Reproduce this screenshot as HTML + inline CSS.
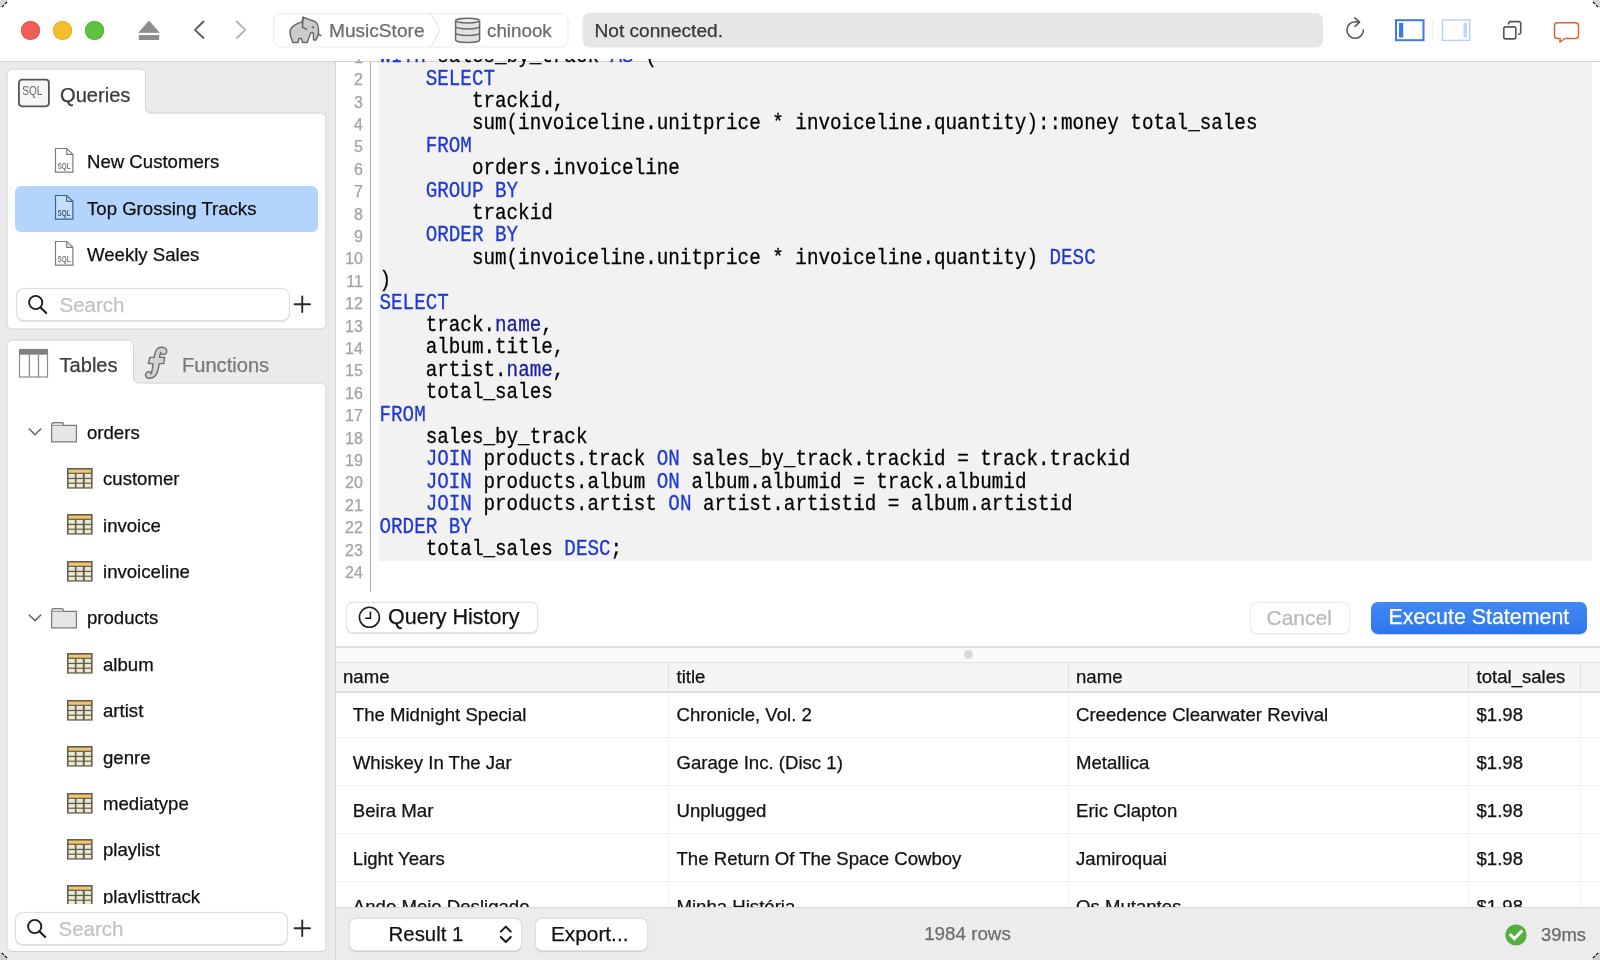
<!DOCTYPE html>
<html><head><meta charset="utf-8"><style>
html,body{margin:0;padding:0;width:1600px;height:960px;overflow:hidden;background:#fff;font-family:"Liberation Sans", sans-serif;}
.r{position:absolute;box-sizing:border-box;}
.t{position:absolute;white-space:pre;font-family:"Liberation Sans", sans-serif;-webkit-text-stroke:0.25px currentColor;}
#root{position:absolute;left:0;top:0;width:1600px;height:960px;overflow:hidden;will-change:transform;}
</style></head><body>
<div id="root">
<div class="r" style="left:0px;top:0px;width:1600px;height:61px;background:#fff;"></div>
<div class="r" style="left:0px;top:61px;width:1600px;height:1px;background:#d2d2d2;"></div>
<div class="r" style="left:0px;top:62px;width:335px;height:898px;background:#ebebeb;"></div>
<div class="r" style="left:335px;top:62px;width:1px;height:898px;background:#d4d4d4;"></div>
<div class="r" style="left:336px;top:62px;width:1264px;height:845px;background:#fff;"></div>
<div class="r" style="left:21.0px;top:21px;width:19px;height:19px;border-radius:50%;background:#ee5f57;box-shadow:inset 0 0 0 0.6px #dc4a41;"></div>
<div class="r" style="left:53.0px;top:21px;width:19px;height:19px;border-radius:50%;background:#f5bd2e;box-shadow:inset 0 0 0 0.6px #dea123;"></div>
<div class="r" style="left:85.0px;top:21px;width:19px;height:19px;border-radius:50%;background:#5bc43f;box-shadow:inset 0 0 0 0.6px #48a92f;"></div>

<svg class="r" style="left:0;top:0" width="1600" height="61" viewBox="0 0 1600 61">
 <path d="M149 21 L159.2 32.6 L138.8 32.6 Z" fill="#8d8d8d" stroke="#8d8d8d" stroke-width="0.8" stroke-linejoin="round"/>
 <rect x="138.8" y="35" width="20.4" height="5" fill="#8d8d8d"/>
 <path d="M203.5 21.5 L195 29.8 L203.5 38" fill="none" stroke="#585858" stroke-width="1.8" stroke-linecap="round" stroke-linejoin="round"/>
 <path d="M236.8 21.5 L245.3 29.8 L236.8 38" fill="none" stroke="#b3b3b3" stroke-width="1.8" stroke-linecap="round" stroke-linejoin="round"/>
 <!-- breadcrumb -->
 <rect x="273.5" y="13.5" width="294.5" height="33.5" rx="7" fill="#fff" stroke="#ececec" stroke-width="1"/>
 <path d="M431 13.5 L440 30 L431 47" fill="none" stroke="#e2e2e2" stroke-width="1"/>
 <!-- not connected -->
 <rect x="582.5" y="13" width="740.5" height="34.5" rx="7" fill="#e6e6e6"/>
 <!-- reload -->
 <path d="M1358.8 21.9 C1357.7 21.75 1356.4 21.7 1355.2 21.7 A8.3 8.3 0 1 0 1363.5 30" fill="none" stroke="#585858" stroke-width="1.6" stroke-linecap="round"/>
 <path d="M1354.9 17.9 L1359.6 22.2 L1355.1 26.4" fill="none" stroke="#585858" stroke-width="1.6" stroke-linecap="round" stroke-linejoin="round"/>
 <!-- sidebar toggles -->
 <rect x="1396" y="20.2" width="27.5" height="20" fill="#fff" stroke="#3a7be3" stroke-width="2"/>
 <rect x="1399" y="23" width="4.2" height="14.5" fill="#3a7be3"/>
 <rect x="1432" y="20" width="1" height="21" fill="#f0f0f0"/>
 <rect x="1442.5" y="20" width="27.2" height="20.4" fill="#fff" stroke="#b5cff5" stroke-width="1.4"/>
 <rect x="1463.5" y="23" width="3.6" height="14.5" fill="#c1d6f6"/>
 <!-- copy -->
 <path d="M1508.6 24.6 V23.4 A1.8 1.8 0 0 1 1510.4 21.6 H1518.9 A1.8 1.8 0 0 1 1520.7 23.4 V32.5 A1.8 1.8 0 0 1 1518.9 34.3 H1518" fill="none" stroke="#555" stroke-width="1.6"/>
 <rect x="1503.8" y="26.9" width="12" height="12" rx="1.8" fill="#fff" stroke="#555" stroke-width="1.6"/>
 <!-- comment -->
 <path d="M1557.5 22.8 H1575.5 A3 3 0 0 1 1578.5 25.8 V35.5 A3 3 0 0 1 1575.5 38.5 H1564.8 L1559.9 42.3 L1560.2 38.5 H1557.5 A3 3 0 0 1 1554.5 35.5 V25.8 A3 3 0 0 1 1557.5 22.8 Z" fill="#fff" stroke="#dc5f36" stroke-width="1.45" stroke-linejoin="round"/>
 <!-- database icon -->
 <g fill="#e2e2e2" stroke="#6a6a6a" stroke-width="1.5">
  <path d="M455.6 20.6 V40 A12 2.5 0 0 0 479.6 40 V20.6"/>
  <ellipse cx="467.6" cy="20.6" rx="12" ry="2.4" fill="#ececec"/>
  <path d="M455.6 26.6 A12 2.4 0 0 0 479.6 26.6" fill="none"/>
  <path d="M455.6 33 A12 2.4 0 0 0 479.6 33" fill="none"/>
 </g>
 <!-- elephant -->
 <g transform="translate(284,12)" stroke="#686868" stroke-width="1.5" stroke-linejoin="round" stroke-linecap="round">
  <path d="M18 9.9 C13.5 11 9.5 13 7 16.5 C5.8 18.2 5.8 20.5 6.3 23 L8.8 30.4 L14.2 30.4 L14.9 26.6 L17.5 26.6 L18.4 30.4 L23.2 30.4 L26.4 21.6 C27.2 20.4 28.7 20.2 29.4 21.4 L29.5 27.8 L31.3 28.3 C33.5 26 34.6 23 34.6 20 C34.6 15 33.6 11.5 31.5 10 C29.5 8.5 27.5 8.2 25.5 7.6 L19.1 5.3 Z" fill="#cbcbcb"/>
  <path d="M19.1 5.3 L18.5 15.2 L22.7 17.4" fill="none"/>
  <path d="M34.5 22 L36.8 23.7" fill="none"/>
  <circle cx="28.9" cy="15.2" r="1.3" fill="#777" stroke="none"/>
 </g>
</svg>
<div class="t" style="left:329.00px;top:21.43px;font-size:19.1px;line-height:19.1px;color:#6d6d6d;font-family:'Liberation Sans', sans-serif;">MusicStore</div>
<div class="t" style="left:487.00px;top:21.68px;font-size:18.8px;line-height:18.8px;color:#6d6d6d;font-family:'Liberation Sans', sans-serif;">chinook</div>
<div class="t" style="left:594.50px;top:21.03px;font-size:19.1px;line-height:19.1px;color:#383838;font-family:'Liberation Sans', sans-serif;">Not connected.</div>
<svg class="r" style="left:0;top:62px" width="335" height="898" viewBox="0 62 335 898">
 <path d="M7 118 V74.5 A5.5 5.5 0 0 1 12.5 69 H140 A5.5 5.5 0 0 1 145.5 74.5 V108 A5 5 0 0 0 150.5 113 H320.5 A5.5 5.5 0 0 1 326 118.5 V324 A5 5 0 0 1 321 329 H12 A5 5 0 0 1 7 324 Z" fill="#fff" stroke="#d2d2d2" stroke-width="1"/>
 <path d="M7 388 V345.5 A5.5 5.5 0 0 1 12.5 340 H128 A5.5 5.5 0 0 1 133.5 345.5 V378 A5 5 0 0 0 138.5 383 H320.5 A5.5 5.5 0 0 1 326 388.5 V946.5 A5 5 0 0 1 321 951.5 H12 A5 5 0 0 1 7 946.5 Z" fill="#fff" stroke="#d2d2d2" stroke-width="1"/>
</svg>
<svg class="r" style="left:16px;top:77px" width="36" height="32" viewBox="0 0 36 32">
 <rect x="2.9" y="2.7" width="30" height="26.6" rx="3.2" fill="#f6f6f6" stroke="#555" stroke-width="1.8"/>
 <text x="0" y="0" font-family="Liberation Sans" font-size="12.6" fill="#6a6a6a" transform="translate(6.3 18.1) scale(0.8 1)">SQL</text>
</svg>
<div class="t" style="left:60.00px;top:84.58px;font-size:20.1px;line-height:20.1px;color:#3c3c3c;font-family:'Liberation Sans', sans-serif;">Queries</div>
<div class="r" style="left:14.5px;top:186px;width:303.0px;height:45.5px;background:#b3d5fd;border-radius:6px;"></div>
<svg class="r" style="left:53px;top:146.3px" width="24" height="29" viewBox="-2 -2 24 29">
 <path d="M0.5 0.5 H11.7 L17.9 6.4 V24.1 H0.5 Z" fill="#fff" stroke="#7a7a7a" stroke-width="1.2" stroke-linejoin="miter"/>
 <path d="M11.7 0.5 V6.4 H17.9" fill="none" stroke="#7a7a7a" stroke-width="1.1"/>
 <text x="0" y="0" font-family="Liberation Sans" font-weight="bold" font-size="8.6" fill="#7a7a7a" transform="translate(2.5 21.3) scale(0.74 1)">SQL</text>
</svg>
<div class="t" style="left:87.00px;top:153.35px;font-size:18.6px;line-height:18.6px;color:#101010;font-family:'Liberation Sans', sans-serif;">New Customers</div>
<svg class="r" style="left:53px;top:192.8px" width="24" height="29" viewBox="-2 -2 24 29">
 <path d="M0.5 0.5 H11.7 L17.9 6.4 V24.1 H0.5 Z" fill="#c5def9" stroke="#3e5f86" stroke-width="1.2" stroke-linejoin="miter"/>
 <path d="M11.7 0.5 V6.4 H17.9" fill="none" stroke="#3e5f86" stroke-width="1.1"/>
 <text x="0" y="0" font-family="Liberation Sans" font-weight="bold" font-size="8.6" fill="#3e5f86" transform="translate(2.5 21.3) scale(0.74 1)">SQL</text>
</svg>
<div class="t" style="left:87.00px;top:199.85px;font-size:18.6px;line-height:18.6px;color:#101010;font-family:'Liberation Sans', sans-serif;">Top Grossing Tracks</div>
<svg class="r" style="left:53px;top:239.3px" width="24" height="29" viewBox="-2 -2 24 29">
 <path d="M0.5 0.5 H11.7 L17.9 6.4 V24.1 H0.5 Z" fill="#fff" stroke="#7a7a7a" stroke-width="1.2" stroke-linejoin="miter"/>
 <path d="M11.7 0.5 V6.4 H17.9" fill="none" stroke="#7a7a7a" stroke-width="1.1"/>
 <text x="0" y="0" font-family="Liberation Sans" font-weight="bold" font-size="8.6" fill="#7a7a7a" transform="translate(2.5 21.3) scale(0.74 1)">SQL</text>
</svg>
<div class="t" style="left:87.00px;top:246.35px;font-size:18.6px;line-height:18.6px;color:#101010;font-family:'Liberation Sans', sans-serif;">Weekly Sales</div>
<div class="r" style="left:15.5px;top:287.5px;width:274.5px;height:33.0px;background:#fff;border:1px solid #dedede;border-radius:8px;box-shadow:0 0.5px 1px rgba(0,0,0,0.12);"></div><svg class="r" style="left:26.5px;top:294.0px" width="22" height="22" viewBox="0 0 22 22">
 <circle cx="8.7" cy="8.5" r="6.6" fill="none" stroke="#1e1e1e" stroke-width="1.9"/>
 <path d="M13.6 13.4 L19.2 19" stroke="#1e1e1e" stroke-width="2.1" stroke-linecap="round"/>
</svg><div class="t" style="left:59.50px;top:294.54px;font-size:20.5px;line-height:20.5px;color:#c3c3c3;font-family:'Liberation Sans', sans-serif;">Search</div><svg class="r" style="left:292.5px;top:294.5px" width="19" height="19" viewBox="0 0 19 19">
 <path d="M9.25 1.5 V17 M1.5 9.25 H17" stroke="#2a2a2a" stroke-width="1.9" stroke-linecap="round"/>
</svg>
<svg class="r" style="left:18px;top:348px" width="32" height="31" viewBox="0 0 32 31">
 <rect x="1.5" y="1.5" width="28" height="27.5" fill="#fff" stroke="#8a8a8a" stroke-width="1.2"/>
 <rect x="1.3" y="1.2" width="28.5" height="5.5" fill="#808080"/>
 <path d="M11.4 6.7 V29 M20.5 6.7 V29" stroke="#8a8a8a" stroke-width="1.3"/>
</svg>
<div class="t" style="left:59.50px;top:354.58px;font-size:20.1px;line-height:20.1px;color:#3c3c3c;font-family:'Liberation Sans', sans-serif;">Tables</div>
<svg class="r" style="left:138px;top:342px" width="40" height="40" viewBox="0 0 40 40">
 <path d="M23.5 5.2 C26.5 5.2 28.8 7 28.8 9.3 C28.8 11.3 27 12.6 25 12.5 C23.5 12.4 22.6 11.5 22.8 10.3 C22 11.5 21.8 13.5 21.6 15.4 L26.7 15.4 L25.6 21.6 L21.2 21.6 C20.5 27 19.5 31.5 17 34 C15.5 35.6 13.5 36.3 11.5 36.3 C9 36.3 7.3 34.8 7.5 32.8 C7.7 30.8 9.3 29.5 11 29.7 C12.3 29.8 13.2 30.7 13 31.9 C14 30.5 14.5 27 15 21.6 L10.5 21.6 L11.8 15.4 L16.2 15.4 C16.8 11 17.8 8.5 19 7.2 C20 6 21.7 5.2 23.5 5.2 Z" fill="#d4d4d4" stroke="#6e6e6e" stroke-width="1.4" stroke-linejoin="round"/>
</svg>
<div class="t" style="left:182.00px;top:354.58px;font-size:20.1px;line-height:20.1px;color:#7a7a7a;font-family:'Liberation Sans', sans-serif;">Functions</div>
<div class="r" style="left:0;top:384px;width:335px;height:520px;overflow:hidden;">
<svg class="r" style="left:27px;top:42.4px" width="16" height="12" viewBox="0 0 16 12">
 <path d="M2.2 3 L8 8.6 L13.8 3" fill="none" stroke="#6a6a6a" stroke-width="1.6" stroke-linecap="round" stroke-linejoin="round"/>
</svg>
<svg class="r" style="left:50.3px;top:37.0px" width="28" height="23" viewBox="-1 -1 28 23">
 <path d="M0.6 3.3 V19.8 H25.4 V3.3 Z" fill="#e6e6e6" stroke="#7c7c7c" stroke-width="1.25" stroke-linejoin="round"/>
 <path d="M0.6 3.3 C0.6 1.5 1.3 0.6 3 0.6 H10.6 C12 0.6 12.6 1.5 12.6 3.3" fill="#e6e6e6" stroke="#7c7c7c" stroke-width="1.2"/>
</svg>
<div class="t" style="left:87.00px;top:39.85px;font-size:18.6px;line-height:18.6px;color:#101010;font-family:'Liberation Sans', sans-serif;">orders</div>
<svg class="r" style="left:67.2px;top:83.79999999999998px" width="26" height="21" viewBox="0 0 26 21">
 <rect x="0" y="0" width="25.6" height="20.6" fill="#625d4f"/>
 <rect x="1.55" y="1.6" width="22.5" height="3.1" fill="#f2c56f"/>
 <rect x="1.55" y="5.9" width="6.3" height="3.9" fill="#e6e8d2"/><rect x="9.5" y="5.9" width="6.3" height="3.9" fill="#e6e8d2"/><rect x="17.75" y="5.9" width="6.3" height="3.9" fill="#e6e8d2"/><rect x="1.55" y="11.1" width="6.3" height="3.5" fill="#efe9d0"/><rect x="9.5" y="11.1" width="6.3" height="3.5" fill="#efe9d0"/><rect x="17.75" y="11.1" width="6.3" height="3.5" fill="#efe9d0"/><rect x="1.55" y="15.8" width="6.3" height="3.5" fill="#efe9d0"/><rect x="9.5" y="15.8" width="6.3" height="3.5" fill="#efe9d0"/><rect x="17.75" y="15.8" width="6.3" height="3.5" fill="#efe9d0"/>
</svg>
<div class="t" style="left:103.00px;top:86.25px;font-size:18.6px;line-height:18.6px;color:#101010;font-family:'Liberation Sans', sans-serif;">customer</div>
<svg class="r" style="left:67.2px;top:130.19999999999996px" width="26" height="21" viewBox="0 0 26 21">
 <rect x="0" y="0" width="25.6" height="20.6" fill="#625d4f"/>
 <rect x="1.55" y="1.6" width="22.5" height="3.1" fill="#f2c56f"/>
 <rect x="1.55" y="5.9" width="6.3" height="3.9" fill="#e6e8d2"/><rect x="9.5" y="5.9" width="6.3" height="3.9" fill="#e6e8d2"/><rect x="17.75" y="5.9" width="6.3" height="3.9" fill="#e6e8d2"/><rect x="1.55" y="11.1" width="6.3" height="3.5" fill="#efe9d0"/><rect x="9.5" y="11.1" width="6.3" height="3.5" fill="#efe9d0"/><rect x="17.75" y="11.1" width="6.3" height="3.5" fill="#efe9d0"/><rect x="1.55" y="15.8" width="6.3" height="3.5" fill="#efe9d0"/><rect x="9.5" y="15.8" width="6.3" height="3.5" fill="#efe9d0"/><rect x="17.75" y="15.8" width="6.3" height="3.5" fill="#efe9d0"/>
</svg>
<div class="t" style="left:103.00px;top:132.65px;font-size:18.6px;line-height:18.6px;color:#101010;font-family:'Liberation Sans', sans-serif;">invoice</div>
<svg class="r" style="left:67.2px;top:176.60000000000005px" width="26" height="21" viewBox="0 0 26 21">
 <rect x="0" y="0" width="25.6" height="20.6" fill="#625d4f"/>
 <rect x="1.55" y="1.6" width="22.5" height="3.1" fill="#f2c56f"/>
 <rect x="1.55" y="5.9" width="6.3" height="3.9" fill="#e6e8d2"/><rect x="9.5" y="5.9" width="6.3" height="3.9" fill="#e6e8d2"/><rect x="17.75" y="5.9" width="6.3" height="3.9" fill="#e6e8d2"/><rect x="1.55" y="11.1" width="6.3" height="3.5" fill="#efe9d0"/><rect x="9.5" y="11.1" width="6.3" height="3.5" fill="#efe9d0"/><rect x="17.75" y="11.1" width="6.3" height="3.5" fill="#efe9d0"/><rect x="1.55" y="15.8" width="6.3" height="3.5" fill="#efe9d0"/><rect x="9.5" y="15.8" width="6.3" height="3.5" fill="#efe9d0"/><rect x="17.75" y="15.8" width="6.3" height="3.5" fill="#efe9d0"/>
</svg>
<div class="t" style="left:103.00px;top:179.05px;font-size:18.6px;line-height:18.6px;color:#101010;font-family:'Liberation Sans', sans-serif;">invoiceline</div>
<svg class="r" style="left:27px;top:228.00000000000003px" width="16" height="12" viewBox="0 0 16 12">
 <path d="M2.2 3 L8 8.6 L13.8 3" fill="none" stroke="#6a6a6a" stroke-width="1.6" stroke-linecap="round" stroke-linejoin="round"/>
</svg>
<svg class="r" style="left:50.3px;top:222.60000000000002px" width="28" height="23" viewBox="-1 -1 28 23">
 <path d="M0.6 3.3 V19.8 H25.4 V3.3 Z" fill="#e6e6e6" stroke="#7c7c7c" stroke-width="1.25" stroke-linejoin="round"/>
 <path d="M0.6 3.3 C0.6 1.5 1.3 0.6 3 0.6 H10.6 C12 0.6 12.6 1.5 12.6 3.3" fill="#e6e6e6" stroke="#7c7c7c" stroke-width="1.2"/>
</svg>
<div class="t" style="left:87.00px;top:225.45px;font-size:18.6px;line-height:18.6px;color:#101010;font-family:'Liberation Sans', sans-serif;">products</div>
<svg class="r" style="left:67.2px;top:269.4px" width="26" height="21" viewBox="0 0 26 21">
 <rect x="0" y="0" width="25.6" height="20.6" fill="#625d4f"/>
 <rect x="1.55" y="1.6" width="22.5" height="3.1" fill="#f2c56f"/>
 <rect x="1.55" y="5.9" width="6.3" height="3.9" fill="#e6e8d2"/><rect x="9.5" y="5.9" width="6.3" height="3.9" fill="#e6e8d2"/><rect x="17.75" y="5.9" width="6.3" height="3.9" fill="#e6e8d2"/><rect x="1.55" y="11.1" width="6.3" height="3.5" fill="#efe9d0"/><rect x="9.5" y="11.1" width="6.3" height="3.5" fill="#efe9d0"/><rect x="17.75" y="11.1" width="6.3" height="3.5" fill="#efe9d0"/><rect x="1.55" y="15.8" width="6.3" height="3.5" fill="#efe9d0"/><rect x="9.5" y="15.8" width="6.3" height="3.5" fill="#efe9d0"/><rect x="17.75" y="15.8" width="6.3" height="3.5" fill="#efe9d0"/>
</svg>
<div class="t" style="left:103.00px;top:271.85px;font-size:18.6px;line-height:18.6px;color:#101010;font-family:'Liberation Sans', sans-serif;">album</div>
<svg class="r" style="left:67.2px;top:315.79999999999995px" width="26" height="21" viewBox="0 0 26 21">
 <rect x="0" y="0" width="25.6" height="20.6" fill="#625d4f"/>
 <rect x="1.55" y="1.6" width="22.5" height="3.1" fill="#f2c56f"/>
 <rect x="1.55" y="5.9" width="6.3" height="3.9" fill="#e6e8d2"/><rect x="9.5" y="5.9" width="6.3" height="3.9" fill="#e6e8d2"/><rect x="17.75" y="5.9" width="6.3" height="3.9" fill="#e6e8d2"/><rect x="1.55" y="11.1" width="6.3" height="3.5" fill="#efe9d0"/><rect x="9.5" y="11.1" width="6.3" height="3.5" fill="#efe9d0"/><rect x="17.75" y="11.1" width="6.3" height="3.5" fill="#efe9d0"/><rect x="1.55" y="15.8" width="6.3" height="3.5" fill="#efe9d0"/><rect x="9.5" y="15.8" width="6.3" height="3.5" fill="#efe9d0"/><rect x="17.75" y="15.8" width="6.3" height="3.5" fill="#efe9d0"/>
</svg>
<div class="t" style="left:103.00px;top:318.25px;font-size:18.6px;line-height:18.6px;color:#101010;font-family:'Liberation Sans', sans-serif;">artist</div>
<svg class="r" style="left:67.2px;top:362.19999999999993px" width="26" height="21" viewBox="0 0 26 21">
 <rect x="0" y="0" width="25.6" height="20.6" fill="#625d4f"/>
 <rect x="1.55" y="1.6" width="22.5" height="3.1" fill="#f2c56f"/>
 <rect x="1.55" y="5.9" width="6.3" height="3.9" fill="#e6e8d2"/><rect x="9.5" y="5.9" width="6.3" height="3.9" fill="#e6e8d2"/><rect x="17.75" y="5.9" width="6.3" height="3.9" fill="#e6e8d2"/><rect x="1.55" y="11.1" width="6.3" height="3.5" fill="#efe9d0"/><rect x="9.5" y="11.1" width="6.3" height="3.5" fill="#efe9d0"/><rect x="17.75" y="11.1" width="6.3" height="3.5" fill="#efe9d0"/><rect x="1.55" y="15.8" width="6.3" height="3.5" fill="#efe9d0"/><rect x="9.5" y="15.8" width="6.3" height="3.5" fill="#efe9d0"/><rect x="17.75" y="15.8" width="6.3" height="3.5" fill="#efe9d0"/>
</svg>
<div class="t" style="left:103.00px;top:364.65px;font-size:18.6px;line-height:18.6px;color:#101010;font-family:'Liberation Sans', sans-serif;">genre</div>
<svg class="r" style="left:67.2px;top:408.6px" width="26" height="21" viewBox="0 0 26 21">
 <rect x="0" y="0" width="25.6" height="20.6" fill="#625d4f"/>
 <rect x="1.55" y="1.6" width="22.5" height="3.1" fill="#f2c56f"/>
 <rect x="1.55" y="5.9" width="6.3" height="3.9" fill="#e6e8d2"/><rect x="9.5" y="5.9" width="6.3" height="3.9" fill="#e6e8d2"/><rect x="17.75" y="5.9" width="6.3" height="3.9" fill="#e6e8d2"/><rect x="1.55" y="11.1" width="6.3" height="3.5" fill="#efe9d0"/><rect x="9.5" y="11.1" width="6.3" height="3.5" fill="#efe9d0"/><rect x="17.75" y="11.1" width="6.3" height="3.5" fill="#efe9d0"/><rect x="1.55" y="15.8" width="6.3" height="3.5" fill="#efe9d0"/><rect x="9.5" y="15.8" width="6.3" height="3.5" fill="#efe9d0"/><rect x="17.75" y="15.8" width="6.3" height="3.5" fill="#efe9d0"/>
</svg>
<div class="t" style="left:103.00px;top:411.05px;font-size:18.6px;line-height:18.6px;color:#101010;font-family:'Liberation Sans', sans-serif;">mediatype</div>
<svg class="r" style="left:67.2px;top:454.9999999999999px" width="26" height="21" viewBox="0 0 26 21">
 <rect x="0" y="0" width="25.6" height="20.6" fill="#625d4f"/>
 <rect x="1.55" y="1.6" width="22.5" height="3.1" fill="#f2c56f"/>
 <rect x="1.55" y="5.9" width="6.3" height="3.9" fill="#e6e8d2"/><rect x="9.5" y="5.9" width="6.3" height="3.9" fill="#e6e8d2"/><rect x="17.75" y="5.9" width="6.3" height="3.9" fill="#e6e8d2"/><rect x="1.55" y="11.1" width="6.3" height="3.5" fill="#efe9d0"/><rect x="9.5" y="11.1" width="6.3" height="3.5" fill="#efe9d0"/><rect x="17.75" y="11.1" width="6.3" height="3.5" fill="#efe9d0"/><rect x="1.55" y="15.8" width="6.3" height="3.5" fill="#efe9d0"/><rect x="9.5" y="15.8" width="6.3" height="3.5" fill="#efe9d0"/><rect x="17.75" y="15.8" width="6.3" height="3.5" fill="#efe9d0"/>
</svg>
<div class="t" style="left:103.00px;top:457.45px;font-size:18.6px;line-height:18.6px;color:#101010;font-family:'Liberation Sans', sans-serif;">playlist</div>
<svg class="r" style="left:67.2px;top:501.4px" width="26" height="21" viewBox="0 0 26 21">
 <rect x="0" y="0" width="25.6" height="20.6" fill="#625d4f"/>
 <rect x="1.55" y="1.6" width="22.5" height="3.1" fill="#f2c56f"/>
 <rect x="1.55" y="5.9" width="6.3" height="3.9" fill="#e6e8d2"/><rect x="9.5" y="5.9" width="6.3" height="3.9" fill="#e6e8d2"/><rect x="17.75" y="5.9" width="6.3" height="3.9" fill="#e6e8d2"/><rect x="1.55" y="11.1" width="6.3" height="3.5" fill="#efe9d0"/><rect x="9.5" y="11.1" width="6.3" height="3.5" fill="#efe9d0"/><rect x="17.75" y="11.1" width="6.3" height="3.5" fill="#efe9d0"/><rect x="1.55" y="15.8" width="6.3" height="3.5" fill="#efe9d0"/><rect x="9.5" y="15.8" width="6.3" height="3.5" fill="#efe9d0"/><rect x="17.75" y="15.8" width="6.3" height="3.5" fill="#efe9d0"/>
</svg>
<div class="t" style="left:103.00px;top:503.85px;font-size:18.6px;line-height:18.6px;color:#101010;font-family:'Liberation Sans', sans-serif;">playlisttrack</div>
</div>
<div class="r" style="left:14.5px;top:911.5px;width:273.0px;height:33.0px;background:#fff;border:1px solid #dedede;border-radius:8px;box-shadow:0 0.5px 1px rgba(0,0,0,0.12);"></div><svg class="r" style="left:25.5px;top:918.0px" width="22" height="22" viewBox="0 0 22 22">
 <circle cx="8.7" cy="8.5" r="6.6" fill="none" stroke="#1e1e1e" stroke-width="1.9"/>
 <path d="M13.6 13.4 L19.2 19" stroke="#1e1e1e" stroke-width="2.1" stroke-linecap="round"/>
</svg><div class="t" style="left:58.50px;top:918.54px;font-size:20.5px;line-height:20.5px;color:#c3c3c3;font-family:'Liberation Sans', sans-serif;">Search</div><svg class="r" style="left:292.5px;top:918.5px" width="19" height="19" viewBox="0 0 19 19">
 <path d="M9.25 1.5 V17 M1.5 9.25 H17" stroke="#2a2a2a" stroke-width="1.9" stroke-linecap="round"/>
</svg>
<div class="r" style="left:379px;top:62px;width:1213px;height:499px;background:#f2f2f2;"></div>
<div class="r" style="left:369.8px;top:62px;width:1.1999999999999886px;height:530px;background:#a9a9a9;"></div>
<div class="r" style="left:336px;top:58.5px;width:1264px;height:533.5px;overflow:hidden;">
<div class="t" style="left:0px;width:26.80000000000001px;text-align:right;top:-8.75px;font-size:16px;line-height:16px;color:#a3a3a3;">1</div>
<div class="t" style="left:0px;width:26.80000000000001px;text-align:right;top:13.65px;font-size:16px;line-height:16px;color:#a3a3a3;">2</div>
<div class="t" style="left:0px;width:26.80000000000001px;text-align:right;top:36.05px;font-size:16px;line-height:16px;color:#a3a3a3;">3</div>
<div class="t" style="left:0px;width:26.80000000000001px;text-align:right;top:58.45px;font-size:16px;line-height:16px;color:#a3a3a3;">4</div>
<div class="t" style="left:0px;width:26.80000000000001px;text-align:right;top:80.85px;font-size:16px;line-height:16px;color:#a3a3a3;">5</div>
<div class="t" style="left:0px;width:26.80000000000001px;text-align:right;top:103.25px;font-size:16px;line-height:16px;color:#a3a3a3;">6</div>
<div class="t" style="left:0px;width:26.80000000000001px;text-align:right;top:125.65px;font-size:16px;line-height:16px;color:#a3a3a3;">7</div>
<div class="t" style="left:0px;width:26.80000000000001px;text-align:right;top:148.05px;font-size:16px;line-height:16px;color:#a3a3a3;">8</div>
<div class="t" style="left:0px;width:26.80000000000001px;text-align:right;top:170.45px;font-size:16px;line-height:16px;color:#a3a3a3;">9</div>
<div class="t" style="left:0px;width:26.80000000000001px;text-align:right;top:192.85px;font-size:16px;line-height:16px;color:#a3a3a3;">10</div>
<div class="t" style="left:0px;width:26.80000000000001px;text-align:right;top:215.25px;font-size:16px;line-height:16px;color:#a3a3a3;">11</div>
<div class="t" style="left:0px;width:26.80000000000001px;text-align:right;top:237.65px;font-size:16px;line-height:16px;color:#a3a3a3;">12</div>
<div class="t" style="left:0px;width:26.80000000000001px;text-align:right;top:260.05px;font-size:16px;line-height:16px;color:#a3a3a3;">13</div>
<div class="t" style="left:0px;width:26.80000000000001px;text-align:right;top:282.45px;font-size:16px;line-height:16px;color:#a3a3a3;">14</div>
<div class="t" style="left:0px;width:26.80000000000001px;text-align:right;top:304.85px;font-size:16px;line-height:16px;color:#a3a3a3;">15</div>
<div class="t" style="left:0px;width:26.80000000000001px;text-align:right;top:327.25px;font-size:16px;line-height:16px;color:#a3a3a3;">16</div>
<div class="t" style="left:0px;width:26.80000000000001px;text-align:right;top:349.65px;font-size:16px;line-height:16px;color:#a3a3a3;">17</div>
<div class="t" style="left:0px;width:26.80000000000001px;text-align:right;top:372.05px;font-size:16px;line-height:16px;color:#a3a3a3;">18</div>
<div class="t" style="left:0px;width:26.80000000000001px;text-align:right;top:394.45px;font-size:16px;line-height:16px;color:#a3a3a3;">19</div>
<div class="t" style="left:0px;width:26.80000000000001px;text-align:right;top:416.85px;font-size:16px;line-height:16px;color:#a3a3a3;">20</div>
<div class="t" style="left:0px;width:26.80000000000001px;text-align:right;top:439.25px;font-size:16px;line-height:16px;color:#a3a3a3;">21</div>
<div class="t" style="left:0px;width:26.80000000000001px;text-align:right;top:461.65px;font-size:16px;line-height:16px;color:#a3a3a3;">22</div>
<div class="t" style="left:0px;width:26.80000000000001px;text-align:right;top:484.05px;font-size:16px;line-height:16px;color:#a3a3a3;">23</div>
<div class="t" style="left:0px;width:26.80000000000001px;text-align:right;top:506.45px;font-size:16px;line-height:16px;color:#a3a3a3;">24</div>
<div class="t" style="left:43.5px;top:-10.25px;font-size:19.25px;line-height:19.25px;color:#000;font-family:'Liberation Mono', monospace;transform:scaleY(1.1);transform-origin:0 14.75px;"><span style="color:#1f38d2">WITH</span> sales_by_track <span style="color:#1f38d2">AS</span> (</div>
<div class="t" style="left:43.5px;top:12.15px;font-size:19.25px;line-height:19.25px;color:#000;font-family:'Liberation Mono', monospace;transform:scaleY(1.1);transform-origin:0 14.75px;">    <span style="color:#1f38d2">SELECT</span></div>
<div class="t" style="left:43.5px;top:34.55px;font-size:19.25px;line-height:19.25px;color:#000;font-family:'Liberation Mono', monospace;transform:scaleY(1.1);transform-origin:0 14.75px;">        trackid,</div>
<div class="t" style="left:43.5px;top:56.95px;font-size:19.25px;line-height:19.25px;color:#000;font-family:'Liberation Mono', monospace;transform:scaleY(1.1);transform-origin:0 14.75px;">        sum(invoiceline.unitprice * invoiceline.quantity)::money total_sales</div>
<div class="t" style="left:43.5px;top:79.35px;font-size:19.25px;line-height:19.25px;color:#000;font-family:'Liberation Mono', monospace;transform:scaleY(1.1);transform-origin:0 14.75px;">    <span style="color:#1f38d2">FROM</span></div>
<div class="t" style="left:43.5px;top:101.75px;font-size:19.25px;line-height:19.25px;color:#000;font-family:'Liberation Mono', monospace;transform:scaleY(1.1);transform-origin:0 14.75px;">        orders.invoiceline</div>
<div class="t" style="left:43.5px;top:124.15px;font-size:19.25px;line-height:19.25px;color:#000;font-family:'Liberation Mono', monospace;transform:scaleY(1.1);transform-origin:0 14.75px;">    <span style="color:#1f38d2">GROUP BY</span></div>
<div class="t" style="left:43.5px;top:146.55px;font-size:19.25px;line-height:19.25px;color:#000;font-family:'Liberation Mono', monospace;transform:scaleY(1.1);transform-origin:0 14.75px;">        trackid</div>
<div class="t" style="left:43.5px;top:168.95px;font-size:19.25px;line-height:19.25px;color:#000;font-family:'Liberation Mono', monospace;transform:scaleY(1.1);transform-origin:0 14.75px;">    <span style="color:#1f38d2">ORDER BY</span></div>
<div class="t" style="left:43.5px;top:191.35px;font-size:19.25px;line-height:19.25px;color:#000;font-family:'Liberation Mono', monospace;transform:scaleY(1.1);transform-origin:0 14.75px;">        sum(invoiceline.unitprice * invoiceline.quantity) <span style="color:#1f38d2">DESC</span></div>
<div class="t" style="left:43.5px;top:213.75px;font-size:19.25px;line-height:19.25px;color:#000;font-family:'Liberation Mono', monospace;transform:scaleY(1.1);transform-origin:0 14.75px;">)</div>
<div class="t" style="left:43.5px;top:236.15px;font-size:19.25px;line-height:19.25px;color:#000;font-family:'Liberation Mono', monospace;transform:scaleY(1.1);transform-origin:0 14.75px;"><span style="color:#1f38d2">SELECT</span></div>
<div class="t" style="left:43.5px;top:258.55px;font-size:19.25px;line-height:19.25px;color:#000;font-family:'Liberation Mono', monospace;transform:scaleY(1.1);transform-origin:0 14.75px;">    track.<span style="color:#1a1aa0">name</span>,</div>
<div class="t" style="left:43.5px;top:280.95px;font-size:19.25px;line-height:19.25px;color:#000;font-family:'Liberation Mono', monospace;transform:scaleY(1.1);transform-origin:0 14.75px;">    album.title,</div>
<div class="t" style="left:43.5px;top:303.35px;font-size:19.25px;line-height:19.25px;color:#000;font-family:'Liberation Mono', monospace;transform:scaleY(1.1);transform-origin:0 14.75px;">    artist.<span style="color:#1a1aa0">name</span>,</div>
<div class="t" style="left:43.5px;top:325.75px;font-size:19.25px;line-height:19.25px;color:#000;font-family:'Liberation Mono', monospace;transform:scaleY(1.1);transform-origin:0 14.75px;">    total_sales</div>
<div class="t" style="left:43.5px;top:348.15px;font-size:19.25px;line-height:19.25px;color:#000;font-family:'Liberation Mono', monospace;transform:scaleY(1.1);transform-origin:0 14.75px;"><span style="color:#1f38d2">FROM</span></div>
<div class="t" style="left:43.5px;top:370.55px;font-size:19.25px;line-height:19.25px;color:#000;font-family:'Liberation Mono', monospace;transform:scaleY(1.1);transform-origin:0 14.75px;">    sales_by_track</div>
<div class="t" style="left:43.5px;top:392.95px;font-size:19.25px;line-height:19.25px;color:#000;font-family:'Liberation Mono', monospace;transform:scaleY(1.1);transform-origin:0 14.75px;">    <span style="color:#1f38d2">JOIN</span> products.track <span style="color:#1f38d2">ON</span> sales_by_track.trackid = track.trackid</div>
<div class="t" style="left:43.5px;top:415.35px;font-size:19.25px;line-height:19.25px;color:#000;font-family:'Liberation Mono', monospace;transform:scaleY(1.1);transform-origin:0 14.75px;">    <span style="color:#1f38d2">JOIN</span> products.album <span style="color:#1f38d2">ON</span> album.albumid = track.albumid</div>
<div class="t" style="left:43.5px;top:437.75px;font-size:19.25px;line-height:19.25px;color:#000;font-family:'Liberation Mono', monospace;transform:scaleY(1.1);transform-origin:0 14.75px;">    <span style="color:#1f38d2">JOIN</span> products.artist <span style="color:#1f38d2">ON</span> artist.artistid = album.artistid</div>
<div class="t" style="left:43.5px;top:460.15px;font-size:19.25px;line-height:19.25px;color:#000;font-family:'Liberation Mono', monospace;transform:scaleY(1.1);transform-origin:0 14.75px;"><span style="color:#1f38d2">ORDER BY</span></div>
<div class="t" style="left:43.5px;top:482.55px;font-size:19.25px;line-height:19.25px;color:#000;font-family:'Liberation Mono', monospace;transform:scaleY(1.1);transform-origin:0 14.75px;">    total_sales <span style="color:#1f38d2">DESC</span>;</div>
<div class="t" style="left:43.5px;top:504.95px;font-size:19.25px;line-height:19.25px;color:#000;font-family:'Liberation Mono', monospace;transform:scaleY(1.1);transform-origin:0 14.75px;"></div>
</div>
<div class="r" style="left:345.5px;top:602px;width:192.0px;height:31px;background:#fff;border:1px solid #e3e3e3;border-radius:7px;box-shadow:0 0.6px 1.2px rgba(0,0,0,0.14);"></div>
<svg class="r" style="left:357px;top:605px" width="25" height="25" viewBox="0 0 25 25">
 <circle cx="12.4" cy="12.3" r="10" fill="none" stroke="#1c1c1c" stroke-width="1.6"/>
 <path d="M13.4 6.4 V13.3 H8.3" fill="none" stroke="#111" stroke-width="1.5" stroke-linecap="butt" stroke-linejoin="miter"/>
</svg>
<div class="t" style="left:388.00px;top:607.00px;font-size:21.5px;line-height:21.5px;color:#111;font-family:'Liberation Sans', sans-serif;">Query History</div>
<div class="r" style="left:1249.5px;top:601.5px;width:100.0px;height:32.5px;background:#fff;border:1px solid #ececec;border-radius:7px;box-shadow:0 0.5px 1px rgba(0,0,0,0.06);"></div>
<div class="t" style="left:1266.50px;top:606.62px;font-size:21px;line-height:21px;color:#b9b9b9;font-family:'Liberation Sans', sans-serif;">Cancel</div>
<div class="r" style="left:1371px;top:601.5px;width:216px;height:32.0px;background:linear-gradient(#4189f5,#2f76ec);border-radius:7px;box-shadow:0 0.5px 1px rgba(0,0,0,0.2);"></div>
<div class="t" style="left:1388.50px;top:607.08px;font-size:21.4px;line-height:21.4px;color:#fff;font-family:'Liberation Sans', sans-serif;">Execute Statement</div>
<div class="r" style="left:336px;top:646px;width:1264px;height:2px;background:#dedede;"></div>
<div class="r" style="left:336px;top:648px;width:1264px;height:14px;background:#fafafa;"></div>
<div class="r" style="left:963.5px;top:649.5px;width:9px;height:9px;border-radius:50%;background:#d8d8d8;"></div>
<div class="r" style="left:336px;top:662px;width:1264px;height:29px;background:#f5f5f5;border-top:1px solid #e3e3e3;"></div>
<div class="r" style="left:336px;top:691px;width:1264px;height:2px;background:#dcdcdc;"></div>
<div class="r" style="left:668.25px;top:662px;width:1.0px;height:29px;background:#e2e2e2;"></div>
<div class="r" style="left:668.25px;top:693px;width:1.0px;height:214px;background:#f1f1f1;"></div>
<div class="r" style="left:1068.25px;top:662px;width:1.0px;height:29px;background:#e2e2e2;"></div>
<div class="r" style="left:1068.25px;top:693px;width:1.0px;height:214px;background:#f1f1f1;"></div>
<div class="r" style="left:1468.1px;top:662px;width:1.0px;height:29px;background:#e2e2e2;"></div>
<div class="r" style="left:1468.1px;top:693px;width:1.0px;height:214px;background:#f1f1f1;"></div>
<div class="r" style="left:1580.1px;top:662px;width:1.0px;height:29px;background:#e2e2e2;"></div>
<div class="r" style="left:1580.1px;top:693px;width:1.0px;height:214px;background:#f1f1f1;"></div>
<div class="t" style="left:343.00px;top:667.65px;font-size:18.6px;line-height:18.6px;color:#111;font-family:'Liberation Sans', sans-serif;">name</div>
<div class="t" style="left:676.50px;top:667.65px;font-size:18.6px;line-height:18.6px;color:#111;font-family:'Liberation Sans', sans-serif;">title</div>
<div class="t" style="left:1076.00px;top:667.65px;font-size:18.6px;line-height:18.6px;color:#111;font-family:'Liberation Sans', sans-serif;">name</div>
<div class="t" style="left:1476.50px;top:667.65px;font-size:18.6px;line-height:18.6px;color:#111;font-family:'Liberation Sans', sans-serif;">total_sales</div>
<div class="r" style="left:336px;top:693px;width:1264px;height:214px;overflow:hidden;">
<div class="r" style="left:0px;top:44.39999999999998px;width:1264px;height:1.0px;background:#efefef;"></div>
<div class="t" style="left:16.80px;top:12.95px;font-size:18.6px;line-height:18.6px;color:#111;font-family:'Liberation Sans', sans-serif;">The Midnight Special</div>
<div class="t" style="left:340.50px;top:12.95px;font-size:18.6px;line-height:18.6px;color:#111;font-family:'Liberation Sans', sans-serif;">Chronicle, Vol. 2</div>
<div class="t" style="left:740.00px;top:12.95px;font-size:18.6px;line-height:18.6px;color:#111;font-family:'Liberation Sans', sans-serif;">Creedence Clearwater Revival</div>
<div class="t" style="left:1140.50px;top:12.95px;font-size:18.6px;line-height:18.6px;color:#111;font-family:'Liberation Sans', sans-serif;">$1.98</div>
<div class="r" style="left:0px;top:92.29999999999995px;width:1264px;height:1.0px;background:#efefef;"></div>
<div class="t" style="left:16.80px;top:60.85px;font-size:18.6px;line-height:18.6px;color:#111;font-family:'Liberation Sans', sans-serif;">Whiskey In The Jar</div>
<div class="t" style="left:340.50px;top:60.85px;font-size:18.6px;line-height:18.6px;color:#111;font-family:'Liberation Sans', sans-serif;">Garage Inc. (Disc 1)</div>
<div class="t" style="left:740.00px;top:60.85px;font-size:18.6px;line-height:18.6px;color:#111;font-family:'Liberation Sans', sans-serif;">Metallica</div>
<div class="t" style="left:1140.50px;top:60.85px;font-size:18.6px;line-height:18.6px;color:#111;font-family:'Liberation Sans', sans-serif;">$1.98</div>
<div class="r" style="left:0px;top:140.19999999999993px;width:1264px;height:1.0px;background:#efefef;"></div>
<div class="t" style="left:16.80px;top:108.75px;font-size:18.6px;line-height:18.6px;color:#111;font-family:'Liberation Sans', sans-serif;">Beira Mar</div>
<div class="t" style="left:340.50px;top:108.75px;font-size:18.6px;line-height:18.6px;color:#111;font-family:'Liberation Sans', sans-serif;">Unplugged</div>
<div class="t" style="left:740.00px;top:108.75px;font-size:18.6px;line-height:18.6px;color:#111;font-family:'Liberation Sans', sans-serif;">Eric Clapton</div>
<div class="t" style="left:1140.50px;top:108.75px;font-size:18.6px;line-height:18.6px;color:#111;font-family:'Liberation Sans', sans-serif;">$1.98</div>
<div class="r" style="left:0px;top:188.0999999999999px;width:1264px;height:1.0px;background:#efefef;"></div>
<div class="t" style="left:16.80px;top:156.65px;font-size:18.6px;line-height:18.6px;color:#111;font-family:'Liberation Sans', sans-serif;">Light Years</div>
<div class="t" style="left:340.50px;top:156.65px;font-size:18.6px;line-height:18.6px;color:#111;font-family:'Liberation Sans', sans-serif;">The Return Of The Space Cowboy</div>
<div class="t" style="left:740.00px;top:156.65px;font-size:18.6px;line-height:18.6px;color:#111;font-family:'Liberation Sans', sans-serif;">Jamiroquai</div>
<div class="t" style="left:1140.50px;top:156.65px;font-size:18.6px;line-height:18.6px;color:#111;font-family:'Liberation Sans', sans-serif;">$1.98</div>
<div class="r" style="left:0px;top:236.0px;width:1264px;height:1.0px;background:#efefef;"></div>
<div class="t" style="left:16.80px;top:204.55px;font-size:18.6px;line-height:18.6px;color:#111;font-family:'Liberation Sans', sans-serif;">Ando Meio Desligado</div>
<div class="t" style="left:340.50px;top:204.55px;font-size:18.6px;line-height:18.6px;color:#111;font-family:'Liberation Sans', sans-serif;">Minha História</div>
<div class="t" style="left:740.00px;top:204.55px;font-size:18.6px;line-height:18.6px;color:#111;font-family:'Liberation Sans', sans-serif;">Os Mutantes</div>
<div class="t" style="left:1140.50px;top:204.55px;font-size:18.6px;line-height:18.6px;color:#111;font-family:'Liberation Sans', sans-serif;">$1.98</div>
</div>
<div class="r" style="left:336px;top:907px;width:1264px;height:53px;background:#ececec;border-top:1px solid #d9d9d9;"></div>
<div class="r" style="left:349px;top:918px;width:172.5px;height:32.5px;background:#fff;border:1px solid #e0e0e0;border-radius:7px;box-shadow:0 0.6px 1.2px rgba(0,0,0,0.14);"></div>
<div class="t" style="left:388.60px;top:923.93px;font-size:20.4px;line-height:20.4px;color:#111;font-family:'Liberation Sans', sans-serif;">Result 1</div>
<svg class="r" style="left:497px;top:925px" width="17" height="20" viewBox="0 0 17 20">
 <path d="M3.8 6.6 L8.8 1.6 L13.8 6.6 M3.8 12 L8.8 17 L13.8 12" fill="none" stroke="#111" stroke-width="1.9" stroke-linecap="round" stroke-linejoin="round"/>
</svg>
<div class="r" style="left:534.5px;top:918px;width:113.5px;height:32.5px;background:#fff;border:1px solid #e0e0e0;border-radius:7px;box-shadow:0 0.6px 1.2px rgba(0,0,0,0.14);"></div>
<div class="t" style="left:551.00px;top:923.59px;font-size:20.8px;line-height:20.8px;color:#111;font-family:'Liberation Sans', sans-serif;">Export...</div>
<div class="t" style="left:567.50px;width:800px;text-align:center;top:925.28px;font-size:18.8px;line-height:18.8px;color:#6e6e6e;">1984 rows</div>
<svg class="r" style="left:1504px;top:922.5px" width="24" height="24" viewBox="0 0 24 24">
 <circle cx="12" cy="12" r="10.6" fill="#53b03b"/>
 <path d="M6.8 12.2 L10.4 15.6 L17.2 8.5" fill="none" stroke="#fff" stroke-width="3" stroke-linecap="square"/>
</svg>
<div class="t" style="left:1541.00px;top:925.52px;font-size:18.4px;line-height:18.4px;color:#6a6a6a;font-family:'Liberation Sans', sans-serif;">39ms</div>
<svg class="r" style="left:0;top:0" width="1600" height="960" viewBox="0 0 1600 960">
 <path d="M0 0 H8.6 L0 8.6 Z" fill="#d3d3d3"/>
 <path d="M1600 0 H1591.4 L1600 8.6 Z" fill="#d3d3d3"/>
 <path d="M0 960 V951.4 L8.6 960 Z" fill="#cfcfcf"/>
 <path d="M1600 960 V951.4 L1591.4 960 Z" fill="#cfcfcf"/>
 <g fill="#000">
  <circle cx="6.5" cy="2.4" r="0.75"/><circle cx="5.4" cy="3.5" r="0.75"/><circle cx="3.5" cy="5.4" r="0.75"/><circle cx="2.4" cy="6.5" r="0.75"/>
  <circle cx="1593.5" cy="2.4" r="0.75"/><circle cx="1594.6" cy="3.5" r="0.75"/><circle cx="1596.5" cy="5.4" r="0.75"/><circle cx="1597.6" cy="6.5" r="0.75"/>
  <circle cx="2.4" cy="953.4" r="0.75"/><circle cx="3.5" cy="954.5" r="0.75"/><circle cx="5.4" cy="956.4" r="0.75"/><circle cx="6.5" cy="957.5" r="0.75"/>
  <circle cx="1597.6" cy="953.4" r="0.75"/><circle cx="1596.5" cy="954.5" r="0.75"/><circle cx="1594.6" cy="956.4" r="0.75"/><circle cx="1593.5" cy="957.5" r="0.75"/>
 </g>
</svg>
</div></body></html>
